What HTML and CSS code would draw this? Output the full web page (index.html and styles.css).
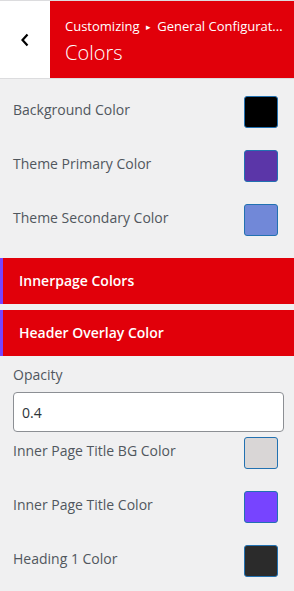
FILE: index.html
```html
<!DOCTYPE html>
<html lang="en">

<head>
    <meta charset="UTF-8">
    <meta name="viewport" content="width=device-width, initial-scale=1.0">
    <title>Colors</title>
    <link rel="stylesheet" href="styles.css">
</head>

<body>
    <div class="header">
        <button class="back" type="button">
            <svg width="10" height="14" viewBox="0 0 10 14"><path d="M7.5 1.5 L2.5 7 L7.5 12.5" fill="none" stroke="#000" stroke-width="2.2"/></svg>
        </button>
        <div class="title">
            <div class="crumb">Customizing <span class="arrow">&#9656;</span> General Configurat...</div>
            <div class="name">Colors</div>
        </div>
    </div>

    <div class="controls">
        <div class="row">
            <span>Background Color</span>
            <span class="swatch" style="background-color: #000000"></span>
        </div>
        <div class="row">
            <span>Theme Primary Color</span>
            <span class="swatch" style="background-color: #5b36a8"></span>
        </div>
        <div class="row">
            <span>Theme Secondary Color</span>
            <span class="swatch" style="background-color: #7188d8"></span>
        </div>

        <div class="section">Innerpage Colors</div>
        <div class="section">Header Overlay Color</div>

        <div class="field">
            <label for="opacity">Opacity</label>
            <input type="text" id="opacity" value="0.4">
        </div>

        <div class="row tight">
            <span>Inner Page Title BG Color</span>
            <span class="swatch" style="background-color: #d9d6d6"></span>
        </div>
        <div class="row">
            <span>Inner Page Title Color</span>
            <span class="swatch" style="background-color: #7744ff"></span>
        </div>
        <div class="row">
            <span>Heading 1 Color</span>
            <span class="swatch" style="background-color: #2b2b2b"></span>
        </div>
    </div>
</body>

</html>
```

FILE: styles.css
```css
body {
    font-family: "Open Sans", "Noto Sans", sans-serif;
    margin: 0;
    padding: 0;
    background-color: #f0f0f1;
    color: #50575e;
}

.header {
    display: flex;
    height: 77px;
    border-top: 1px solid #dcdcde;
    border-bottom: 1px solid #dcdcde;
}

.back {
    width: 50px;
    border: none;
    background-color: #fff;
    display: flex;
    align-items: center;
    justify-content: center;
    padding: 0;
}

.title {
    flex: 1;
    background-color: #e1000a;
    color: #fff;
    padding: 15px 0 0 15px;
    overflow: hidden;
}

.crumb {
    font-size: 13px;
    line-height: 20px;
    white-space: nowrap;
}

.arrow {
    font-size: 9px;
    vertical-align: 1px;
    margin: 0 3px;
}

.name {
    font-size: 20px;
    font-weight: 300;
    line-height: 28px;
    margin-top: 2px;
}

.controls {
    padding: 17px 0 14px;
}

.row {
    display: flex;
    align-items: center;
    justify-content: space-between;
    height: 32px;
    padding: 0 16px 0 13px;
    margin-bottom: 22px;
    font-size: 14px;
}

.row > span:first-child {
    padding-bottom: 5px;
}

.row.tight {
    margin-top: 5px;
}

.swatch {
    width: 32px;
    height: 30px;
    border: 1px solid #2271b1;
    border-radius: 3px;
}

.section {
    background-color: #e1000a;
    color: #fff;
    font-weight: 600;
    font-size: 14px;
    height: 46px;
    line-height: 46px;
    padding-left: 16px;
    border-left: 3px solid #7744ff;
    margin-bottom: 6px;
}

.field {
    padding: 0 10px 0 13px;
}

label {
    display: block;
    font-size: 14px;
    line-height: 20px;
    margin: 9px 0 7px;
}

input[type="text"] {
    width: 100%;
    height: 40px;
    padding: 0 8px;
    border: 1px solid #8c8f94;
    border-radius: 4px;
    box-sizing: border-box;
    font-family: inherit;
    font-size: 14px;
    color: #2c3338;
    background-color: #fff;
}
```
